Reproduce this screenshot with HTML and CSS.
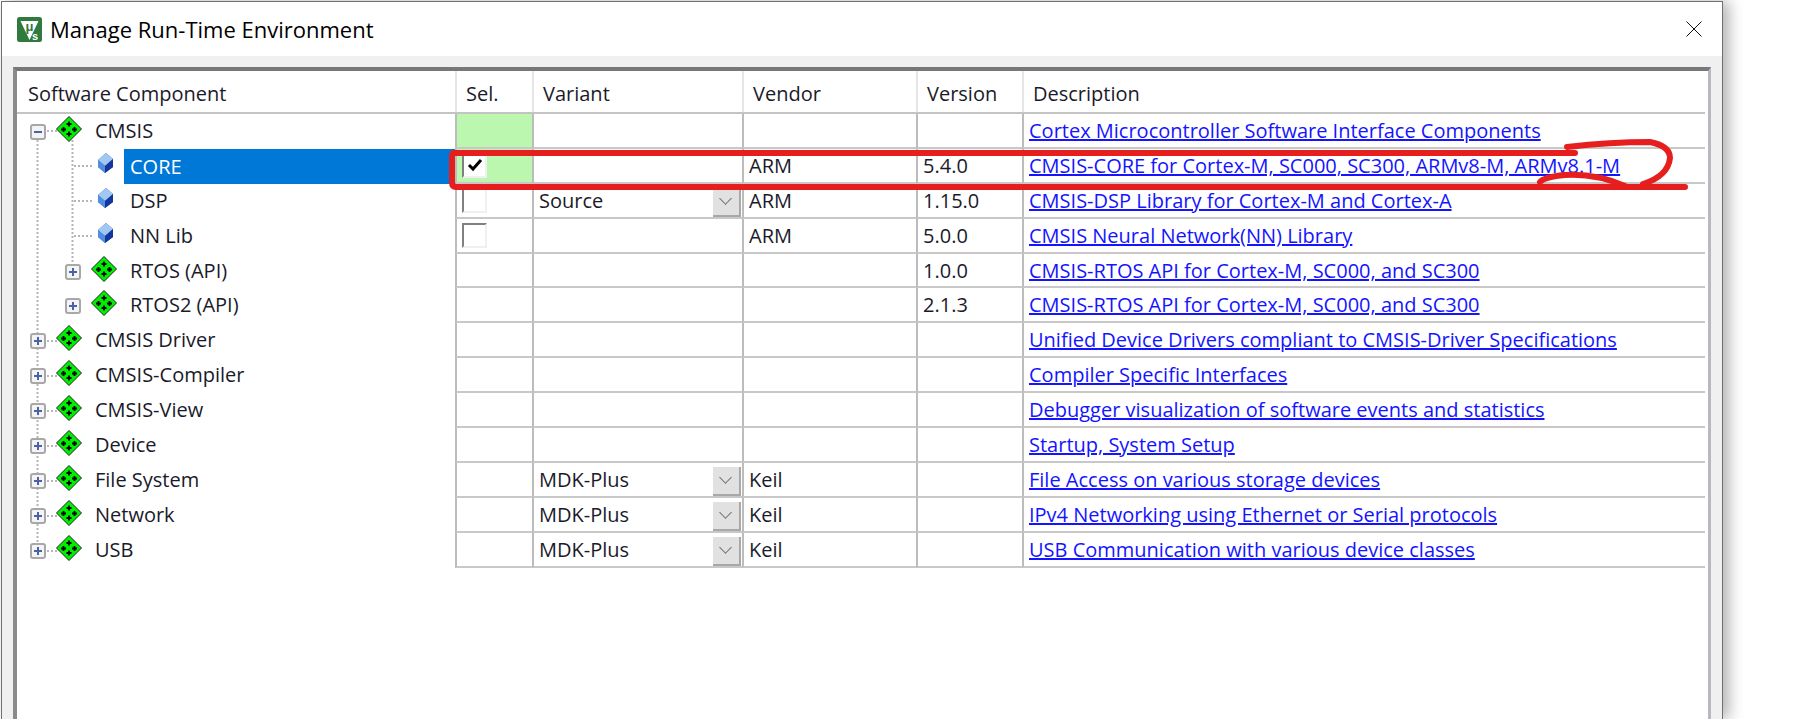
FILE: index.html
```html
<!DOCTYPE html>
<html lang="en">
<head>
  <meta charset="UTF-8" />
  <title>Manage Run-Time Environment</title>
  <link rel="stylesheet" href="styles.css">
</head>
<body>
  <svg class="defs" width="0" height="0">
    <symbol id="pack" viewBox="0 0 26 26">
      <path d="M13 .5 25.5 13 13 25.5 .5 13Z" fill="#00ef00" stroke="#222" stroke-width="1"/>
      <path d="M13 5.5v5M10.5 8h5M7.5 11v5M5 13.5h5M18.500 11v5M16 13.500h5M13 15.500v5M10.500 18h5" stroke="#000" stroke-width="1.800"/>
    </symbol>
    <symbol id="cube" viewBox="0 0 15 20">
      <path d="M8 0 15 6 15 14 7 20 0 14 0 7Z" fill="#2a5fc8"/>
      <path d="M8 0 15 6 7 13 0 7Z" fill="#a0c8f0"/>
      <path d="M0 7 7 13 7 20 0 14Z" fill="#4f8ee0"/>
      <path d="M7 13 15 6 15 14 7 20Z" fill="#12369c"/>
    </symbol>
  </svg>

  <div class="window">
    <div class="titlebar">
      <svg class="app-icon" viewBox="0 0 25 25">
        <rect width="25" height="25" rx="2.500" fill="#2f7a3c"/>
        <path d="M3.500 4H21.500L12.500 23Z" fill="#fff"/>
        <text x="8.500" y="14" class="app-icon-mu">μ</text>
        <text x="15" y="23" class="app-icon-s">s</text>
      </svg>
      <span class="title">Manage Run-Time Environment</span>
      <svg class="close" viewBox="0 0 16 16"><path d="M.5 .5 15.500 15.500M15.500 .5 .5 15.500" stroke="#111" stroke-width="1" fill="none"/></svg>
    </div>

    <div class="body">
      <div class="panel">
        <div class="row header">
          <div class="cell first">Software Component</div>
          <div class="cell sel">Sel.</div>
          <div class="cell">Variant</div>
          <div class="cell">Vendor</div>
          <div class="cell">Version</div>
          <div class="cell">Description</div>
        </div>

        <div class="rows">
          <svg class="tree-lines" width="120" height="460">
            <path d="M20.500 26V438M55.500 26V160M30 17h10M30 437h10M57 52h20M57 87h20M57 122h20M57 157h8M57 192h8M30 227h10M30 262h10M30 297h10M30 332h10M30 367h10M30 402h10" fill="none" stroke="#b5b5b5" stroke-dasharray="2 2" stroke-width="2"/>
          </svg>

          <div class="row">
            <div class="node"><span class="exp minus"></span><svg class="pack"><use href="#pack"/></svg><span class="label">CMSIS</span></div>
            <div class="cell green"></div><div class="cell"></div><div class="cell"></div><div class="cell"></div>
            <div class="cell"><a href="#">Cortex Microcontroller Software Interface Components</a></div>
          </div>
          <div class="row">
            <div class="node leaf"><svg class="cube"><use href="#cube"/></svg><span class="label selected">CORE</span></div>
            <div class="cell green"><span class="check on"><svg viewBox="0 0 16 14"><path d="M2 7 6 11 14 2" fill="none" stroke="#000" stroke-width="3"/></svg></span></div>
            <div class="cell"></div><div class="cell">ARM</div><div class="cell">5.4.0</div>
            <div class="cell"><a href="#">CMSIS-CORE for Cortex-M, SC000, SC300, ARMv8-M, ARMv8.1-M</a></div>
          </div>
          <div class="row">
            <div class="node leaf"><svg class="cube"><use href="#cube"/></svg><span class="label">DSP</span></div>
            <div class="cell"><span class="check"></span></div>
            <div class="cell variant">Source<span class="drop"></span></div><div class="cell">ARM</div><div class="cell">1.15.0</div>
            <div class="cell"><a href="#">CMSIS-DSP Library for Cortex-M and Cortex-A</a></div>
          </div>
          <div class="row">
            <div class="node leaf"><svg class="cube"><use href="#cube"/></svg><span class="label">NN Lib</span></div>
            <div class="cell"><span class="check"></span></div>
            <div class="cell"></div><div class="cell">ARM</div><div class="cell">5.0.0</div>
            <div class="cell"><a href="#">CMSIS Neural Network(NN) Library</a></div>
          </div>
          <div class="row">
            <div class="node sub"><span class="exp plus"></span><svg class="pack"><use href="#pack"/></svg><span class="label">RTOS (API)</span></div>
            <div class="cell"></div><div class="cell"></div><div class="cell"></div><div class="cell">1.0.0</div>
            <div class="cell"><a href="#">CMSIS-RTOS API for Cortex-M, SC000, and SC300</a></div>
          </div>
          <div class="row">
            <div class="node sub"><span class="exp plus"></span><svg class="pack"><use href="#pack"/></svg><span class="label">RTOS2 (API)</span></div>
            <div class="cell"></div><div class="cell"></div><div class="cell"></div><div class="cell">2.1.3</div>
            <div class="cell"><a href="#">CMSIS-RTOS API for Cortex-M, SC000, and SC300</a></div>
          </div>
          <div class="row">
            <div class="node"><span class="exp plus"></span><svg class="pack"><use href="#pack"/></svg><span class="label">CMSIS Driver</span></div>
            <div class="cell"></div><div class="cell"></div><div class="cell"></div><div class="cell"></div>
            <div class="cell"><a href="#">Unified Device Drivers compliant to CMSIS-Driver Specifications</a></div>
          </div>
          <div class="row">
            <div class="node"><span class="exp plus"></span><svg class="pack"><use href="#pack"/></svg><span class="label">CMSIS-Compiler</span></div>
            <div class="cell"></div><div class="cell"></div><div class="cell"></div><div class="cell"></div>
            <div class="cell"><a href="#">Compiler Specific Interfaces</a></div>
          </div>
          <div class="row">
            <div class="node"><span class="exp plus"></span><svg class="pack"><use href="#pack"/></svg><span class="label">CMSIS-View</span></div>
            <div class="cell"></div><div class="cell"></div><div class="cell"></div><div class="cell"></div>
            <div class="cell"><a href="#">Debugger visualization of software events and statistics</a></div>
          </div>
          <div class="row">
            <div class="node"><span class="exp plus"></span><svg class="pack"><use href="#pack"/></svg><span class="label">Device</span></div>
            <div class="cell"></div><div class="cell"></div><div class="cell"></div><div class="cell"></div>
            <div class="cell"><a href="#">Startup, System Setup</a></div>
          </div>
          <div class="row">
            <div class="node"><span class="exp plus"></span><svg class="pack"><use href="#pack"/></svg><span class="label">File System</span></div>
            <div class="cell"></div><div class="cell variant">MDK-Plus<span class="drop"></span></div><div class="cell">Keil</div><div class="cell"></div>
            <div class="cell"><a href="#">File Access on various storage devices</a></div>
          </div>
          <div class="row">
            <div class="node"><span class="exp plus"></span><svg class="pack"><use href="#pack"/></svg><span class="label">Network</span></div>
            <div class="cell"></div><div class="cell variant">MDK-Plus<span class="drop"></span></div><div class="cell">Keil</div><div class="cell"></div>
            <div class="cell"><a href="#">IPv4 Networking using Ethernet or Serial protocols</a></div>
          </div>
          <div class="row">
            <div class="node"><span class="exp plus"></span><svg class="pack"><use href="#pack"/></svg><span class="label">USB</span></div>
            <div class="cell"></div><div class="cell variant">MDK-Plus<span class="drop"></span></div><div class="cell">Keil</div><div class="cell"></div>
            <div class="cell"><a href="#">USB Communication with various device classes</a></div>
          </div>
        </div>
      </div>
    </div>
  </div>

  <!-- red marker drawn over the screenshot -->
  <svg class="marker" width="1795" height="719">
    <path d="M1575 153H454Q452 153 452 156V182Q452 187 456 187H1685" fill="none" stroke="#e61e1e" stroke-width="6" stroke-linecap="round"/>
    <path d="M1567 147Q1610 142 1650 142Q1670 146 1670 158Q1668 176 1643 184" fill="none" stroke="#e61e1e" stroke-width="6" stroke-linecap="round"/>
    <path d="M1540 182Q1544 177 1565 175Q1595 173 1625 186" fill="none" stroke="#e61e1e" stroke-width="6" stroke-linecap="round"/>
  </svg>
</body>
</html>
```

FILE: styles.css
```css
html, body {
  margin: 0;
  height: 100%;
  overflow: hidden;
  background: #fff;
}
body {
  font-family: "Open Sans", "Noto Sans", sans-serif;
  font-size: 20px;
  color: #1a1a2a;
}
.defs { position: absolute; }

.window {
  box-sizing: border-box;
  width: 1722px;
  height: 718px;
  margin: 1px 0 0 1px;
  border: 1px solid #707070;
  border-bottom: 0;
  background: #f0f0f0;
  box-shadow: 6px 0 14px rgba(0, 0, 0, 0.3);
  display: flex;
  flex-direction: column;
}

.titlebar {
  height: 54px;
  flex: none;
  background: #fff;
  display: flex;
  align-items: center;
  padding: 0 20px 0 15px;
}
.app-icon { width: 25px; height: 25px; margin-right: 8px; }
.app-icon-mu { font: bold 13px "Liberation Sans", sans-serif; fill: #2f7a3c; }
.app-icon-s { font: bold 11px "Liberation Sans", sans-serif; fill: #fff; }
.title { font-size: 22px; color: #000; flex: 1; }
.close { width: 16px; height: 16px; }

.body { flex: 1; min-height: 0; padding: 11px 11px 0; }
.panel {
  box-sizing: border-box;
  height: 100%;
  background: #fff;
  border-top: 4px solid #777;
  border-left: 4px solid #8a8a8a;
  border-right: 3px solid #b8b8c0;
  padding-right: 3px;
}

.row {
  display: grid;
  grid-template-columns: 438px 77px 210px 174px 106px 1fr;
  height: 34.900px;
}
.rows { position: relative; }
.header { height: 43px; border-bottom: 2px solid #c4c4c4; box-sizing: border-box; }
.header .cell { border-bottom: 0; border-left-color: #e6e6e6; padding-left: 9px; padding-top: 4px; }
.header .first { border-left: 0; padding-left: 11px; }

.cell {
  box-sizing: border-box;
  border-left: 2px solid #bcbcbc;
  border-bottom: 2px solid #c8c8c8;
  padding-left: 5px;
  display: flex;
  align-items: center;
  position: relative;
  white-space: nowrap;
}
.green { background: #bbf7ae; }
a { color: #1414ff; }

.node {
  display: flex;
  align-items: center;
  padding-left: 13px;
}
.node.sub { padding-left: 48px; }
.node.leaf { padding-left: 81px; }

.exp {
  box-sizing: border-box;
  width: 16px;
  height: 16px;
  border: 2px solid #a8a8a8;
  border-radius: 3px;
  background: #f4f4f4;
  position: relative;
  margin-top: 1px;
}
.exp::before, .plus::after {
  content: "";
  position: absolute;
  background: #4a62a8;
  left: 2px;
  top: 5px;
  width: 8px;
  height: 2px;
}
.plus::after { left: 5px; top: 2px; width: 2px; height: 8px; }

.pack { width: 26px; height: 26px; margin: -5px 0 0 10px; }
.cube { width: 15px; height: 20px; margin-top: -7px; }
.label { margin-left: 13px; position: relative; margin-top: -2px; }
.leaf .label { margin: -2px 0 0 11px; padding-left: 6px; }
.selected {
  flex: 1;
  align-self: stretch;
  background: #0078d7;
  color: #fff;
  display: flex;
  align-items: center;
}
.leaf .selected { margin-top: 0; }

.check {
  box-sizing: border-box;
  width: 25px;
  height: 25px;
  border: 2px solid #f0f0f0;
  border-top-color: #808080;
  border-left-color: #808080;
  background: #fff;
  display: flex;
  align-items: center;
  justify-content: center;
}
.check svg { width: 16px; height: 14px; }

.variant { padding-left: 5px; }
.drop {
  position: absolute;
  right: 1px;
  top: 4px;
  bottom: 0;
  width: 28px;
  box-sizing: border-box;
  background: #e1e1e1;
  border-right: 2px solid #a8a8a8;
  border-bottom: 2px solid #a8a8a8;
}
.drop::after {
  content: "";
  position: absolute;
  left: 8px;
  top: 6px;
  width: 8px;
  height: 8px;
  border-right: 1.500px solid #707070;
  border-bottom: 1.500px solid #707070;
  transform: rotate(45deg);
}

.tree-lines { position: absolute; left: 0; top: 0; pointer-events: none; }
.marker { position: absolute; left: 0; top: 0; pointer-events: none; }
```
